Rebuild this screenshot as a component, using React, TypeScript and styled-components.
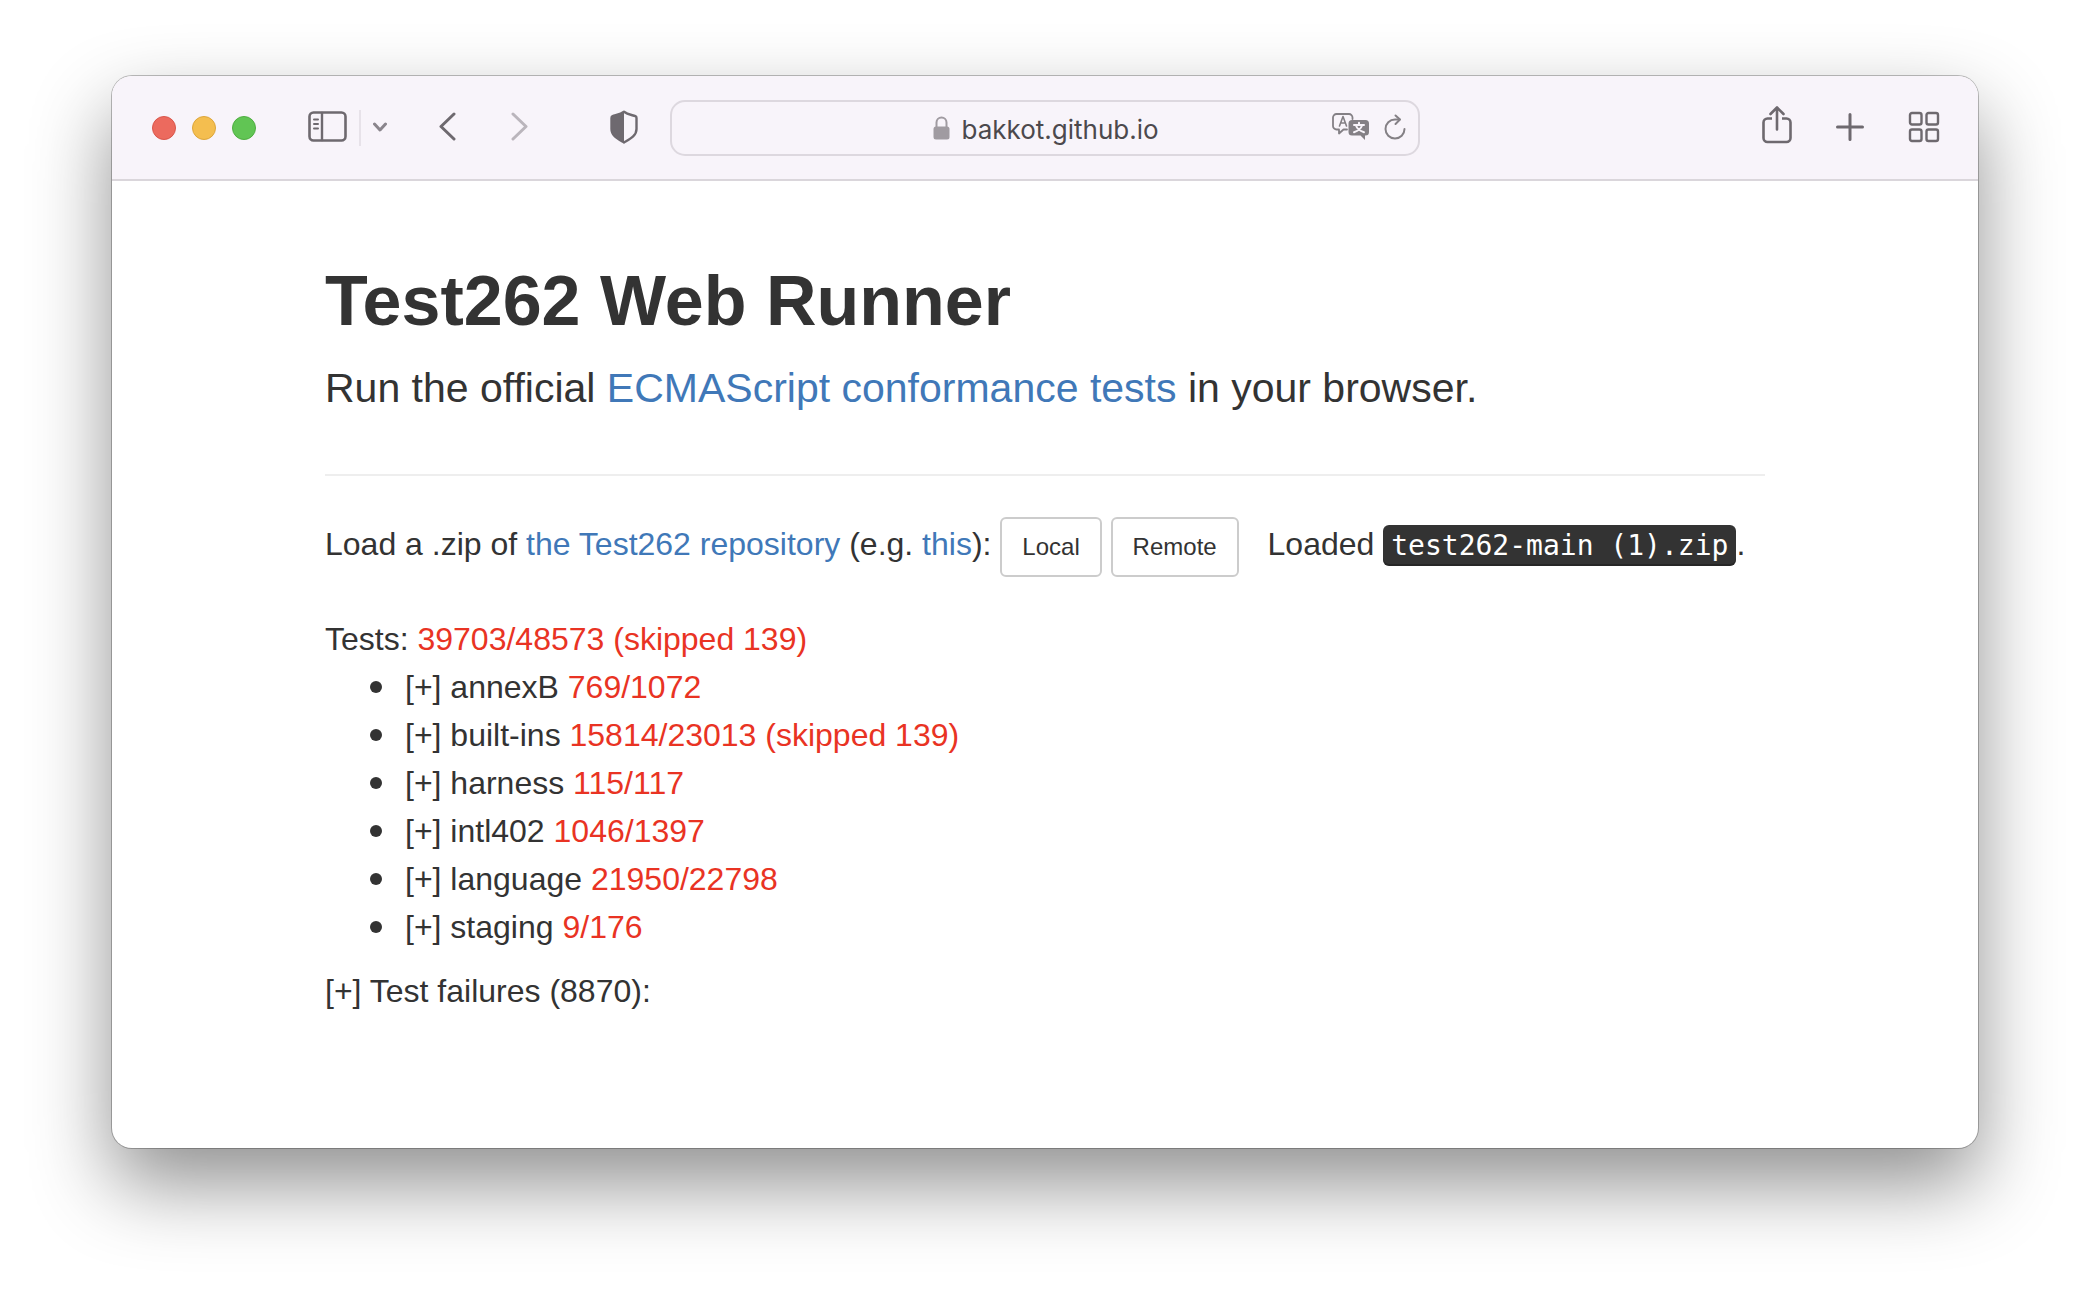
import React from "react";
import styled, { createGlobalStyle } from "styled-components";

const ink = "#333";
const glyph = "#6e696f";
const sans = `"Liberation Sans", Arial, sans-serif`;

const GlobalStyle = createGlobalStyle`
  *, *::before, *::after { box-sizing: border-box; }
  body { margin: 0; background: #fff; color: ${ink}; font-family: ${sans}; }
`;

const Desktop = styled.div`
  min-height: 100vh;
  padding: 76px 112px 148px;
`;

const Window = styled.section`
  border-radius: 20px;
  background: #fff;
  box-shadow: 0 0 0 1px rgba(0, 0, 0, 0.25), 0 36px 80px rgba(0, 0, 0, 0.44);
`;

const Toolbar = styled.header`
  display: grid;
  grid-template-columns: minmax(0, 1fr) minmax(0, 750px) minmax(0, 1fr);
  align-items: center;
  height: 105px;
  border-bottom: 2px solid #dad6db;
  border-radius: 20px 20px 0 0;
  background: #f8f4fa;
`;

const ToolGroup = styled.div<{ $end?: boolean }>`
  display: flex;
  align-items: center;
  justify-content: ${(p) => (p.$end ? "flex-end" : "flex-start")};
  gap: ${(p) => (p.$end ? "44px" : "52px")};
  padding: ${(p) => (p.$end ? "0 38px 0 0" : "0 32px 0 40px")};
`;

const Cluster = styled.div<{ $gap: number }>`
  display: flex;
  align-items: center;
  gap: ${(p) => p.$gap}px;
`;

const Light = styled.button<{ $fill: string; $edge: string }>`
  width: 24px;
  height: 24px;
  padding: 0;
  border: 1px solid ${(p) => p.$edge};
  border-radius: 50%;
  background: ${(p) => p.$fill};
`;

const Divider = styled.span`
  width: 2px;
  height: 36px;
  background: #e7e2e9;
`;

const IconButton = styled.button<{ $tone?: string; $push?: boolean }>`
  display: block;
  margin-left: ${(p) => (p.$push ? "auto" : "0")};
  padding: 0 0 2px;
  border: 0;
  background: none;
  color: ${(p) => p.$tone ?? glyph};

  svg {
    display: block;
    fill: none;
    stroke: currentColor;
    stroke-width: 3;
    stroke-linecap: round;
    stroke-linejoin: round;
  }
`;

const AddressBar = styled.div`
  display: grid;
  grid-template-columns: 1fr auto 1fr;
  align-items: center;
  height: 56px;
  padding: 0 12px;
  border: 2px solid #ddd8df;
  border-radius: 15px;
`;

const AddressLabel = styled.label`
  grid-column: 2;
  display: flex;
  align-items: center;
  gap: 12px;
`;

const AddressInput = styled.input`
  width: 196px;
  padding: 4px 0 0;
  border: 0;
  outline: 0;
  background: none;
  color: #4c494d;
  font: 26px/32px Inter, sans-serif;
`;

const AddressTools = styled.div`
  display: flex;
  align-items: center;
  justify-content: flex-end;
  gap: 14px;
`;

const Page = styled.main`
  max-width: 1440px;
  margin: 0 auto;
  padding: 80px 0 133px;
  font-size: 32px;
  line-height: 48px;
`;

const Title = styled.h1`
  margin: 0;
  font-size: 70px;
  line-height: 80px;
  font-weight: 700;
`;

const Lead = styled.p`
  margin: 17px 0 0;
  font-size: 41px;
  line-height: 60px;
  font-weight: 300;
`;

const Rule = styled.hr`
  height: 2px;
  margin: 56px 0 38px;
  border: 0;
  background: #eee;
`;

const Link = styled.a`
  color: #4078b8;
  text-decoration: none;
`;

const LoadLine = styled.p`
  margin: 0;
  line-height: 60px;
`;

const LoadButton = styled.button`
  padding: 10px 20px;
  border: 2px solid #ccc;
  border-radius: 6px;
  background: #fff;
  color: ${ink};
  font: 24px/36px ${sans};
  vertical-align: middle;
`;

const Loaded = styled.span`
  margin-left: 20px;
`;

const FileName = styled.kbd`
  padding: 4px 8px;
  border-radius: 6px;
  background: #333;
  box-shadow: inset 0 -2px 0 rgba(0, 0, 0, 0.25);
  color: #fff;
  font: 28px "DejaVu Sans Mono", monospace;
`;

const Results = styled.section`
  margin-top: 38px;
`;

const Tree = styled.ul`
  margin: 0 0 16px;
  padding-left: 80px;
  list-style: none;
`;

const Suite = styled.li`
  &::before {
    content: "";
    display: inline-block;
    width: 12px;
    height: 12px;
    margin: 0 23px 0 -35px;
    border-radius: 50%;
    background: ${ink};
    vertical-align: 5px;
  }
`;

const Toggle = styled.button`
  padding: 0;
  border: 0;
  background: none;
  color: inherit;
  font: inherit;
`;

const Score = styled.span`
  color: #e93323;
`;

const suites = [
  { name: "annexB", score: "769/1072" },
  { name: "built-ins", score: "15814/23013 (skipped 139)" },
  { name: "harness", score: "115/117" },
  { name: "intl402", score: "1046/1397" },
  { name: "language", score: "21950/22798" },
  { name: "staging", score: "9/176" },
];

const SidebarIcon = () => (
  <svg width="39" height="31" viewBox="0 0 39 31">
    <rect x="1.5" y="1.5" width="36" height="28" rx="4" strokeWidth="2.6" />
    <path d="M14 2v27" strokeWidth="2.4" />
    <path d="M6 8.500h4M6 13h4M6 17.500h4" strokeWidth="2" />
  </svg>
);

const ChevronIcon = () => (
  <svg width="14" height="10" viewBox="0 0 14 10">
    <path d="M1.500 2 7 8l5.500-6" />
  </svg>
);

const BackIcon = () => (
  <svg width="17" height="29" viewBox="0 0 17 29">
    <path d="M15 2 2 14.500 15 27" />
  </svg>
);

const ForwardIcon = () => (
  <svg width="17" height="29" viewBox="0 0 17 29">
    <path d="m2 2 13 12.500L2 27" />
  </svg>
);

const ShieldIcon = () => (
  <svg width="28" height="34" viewBox="0 0 28 34">
    <path d="M14 1.800C10.500 4.400 6 5 2.600 6.200 1.800 6.500 1.500 7 1.500 8v11c0 7 6.500 10 12.500 13.500C20 29 26.500 26 26.500 19V8c0-1-.3-1.500-1.100-1.800C22 5 17.500 4.400 14 1.800Z" strokeWidth="2.400" />
    <path d="M14 2C10.500 4.400 6 5 2.600 6.200 1.800 6.500 1.500 7 1.500 8v11c0 7 6.500 10 12.500 13.500Z" fill="currentColor" stroke="none" />
  </svg>
);

const LockIcon = () => (
  <svg width="17" height="24" viewBox="0 0 17 24" aria-hidden="true">
    <path d="M3.500 12V6.500a5 5 0 0 1 10 0V12" fill="none" stroke="#a09ba1" strokeWidth="2" />
    <rect x="0.500" y="10.500" width="16" height="13" rx="2.500" fill="#a09ba1" />
  </svg>
);

const TranslateIcon = () => (
  <svg width="38" height="28" viewBox="0 0 38 28">
    <path d="M15 16.500h-3.500L7 20.500v-4H4.500a3.500 3.500 0 0 1-3.500-3.500V4.500A3.500 3.500 0 0 1 4.500 1h12.500a3.500 3.500 0 0 1 3.500 3.500V6" strokeWidth="1.800" />
    <path d="m7.500 13 3.500-9.500L14.500 13M8.600 10h4.800" strokeWidth="1.600" />
    <path d="M20 7h13.500a3.500 3.500 0 0 1 3.500 3.500V19a3.500 3.500 0 0 1-3.500 3.500H33V27l-4.500-4.500H20a3.500 3.500 0 0 1-3.500-3.500v-8.500A3.500 3.500 0 0 1 20 7Z" fill="currentColor" stroke="none" />
    <path d="M22 12h10M27 9.800v2M30 12.500c-1 3-4 5.500-8 6.700M24 12.500c1 3 4 5.500 8 6.700" stroke="#f8f4fa" strokeWidth="2" />
  </svg>
);

const ReloadIcon = () => (
  <svg width="22" height="26" viewBox="0 0 22 26">
    <path d="M20.500 15A9.500 9.500 0 1 1 11 5.500h4.500" strokeWidth="2" />
    <path d="m11.500 1.500 4.500 4-4.500 4.500" strokeWidth="2" />
  </svg>
);

const ShareIcon = () => (
  <svg width="30" height="41" viewBox="0 0 30 41">
    <path d="M10 12.500H5.500a4 4 0 0 0-4 4V32a4 4 0 0 0 4 4h19a4 4 0 0 0 4-4V16.500a4 4 0 0 0-4-4H20" strokeWidth="2.600" strokeLinecap="butt" />
    <path d="M15 23.500V2M8.500 8 15 1.500 21.500 8" strokeWidth="2.600" />
  </svg>
);

const PlusIcon = () => (
  <svg width="28" height="28" viewBox="0 0 28 28">
    <path d="M14 1.500v25M1.500 14h25" />
  </svg>
);

const GridIcon = () => (
  <svg width="32" height="32" viewBox="0 0 32 32">
    <g strokeWidth="2.400">
      <rect x="2" y="2" width="11.500" height="11.500" rx="2" />
      <rect x="18.500" y="2" width="11.500" height="11.500" rx="2" />
      <rect x="2" y="18.500" width="11.500" height="11.500" rx="2" />
      <rect x="18.500" y="18.500" width="11.500" height="11.500" rx="2" />
    </g>
  </svg>
);

export default function App() {
  return (
    <>
      <GlobalStyle />
      <Desktop>
        <Window>
          <Toolbar>
            <ToolGroup>
              <Cluster $gap={16}>
                <Light $fill="#ec6a5e" $edge="#d9564b" aria-label="Close" />
                <Light $fill="#f4be4f" $edge="#dda63b" aria-label="Minimize" />
                <Light $fill="#61c554" $edge="#4fae41" aria-label="Zoom" />
              </Cluster>
              <Cluster $gap={12}>
                <IconButton aria-label="Show sidebar"><SidebarIcon /></IconButton>
                <Divider />
                <IconButton $tone="#8a858c" aria-label="Tab groups"><ChevronIcon /></IconButton>
              </Cluster>
              <Cluster $gap={55}>
                <IconButton aria-label="Back"><BackIcon /></IconButton>
                <IconButton $tone="#bab5bc" aria-label="Forward"><ForwardIcon /></IconButton>
              </Cluster>
              <IconButton $push aria-label="Privacy report"><ShieldIcon /></IconButton>
            </ToolGroup>
            <AddressBar>
              <AddressLabel>
                <LockIcon />
                <AddressInput type="text" aria-label="Address" defaultValue="bakkot.github.io" />
              </AddressLabel>
              <AddressTools>
                <IconButton $tone="#848085" aria-label="Translate"><TranslateIcon /></IconButton>
                <IconButton $tone="#848085" aria-label="Reload"><ReloadIcon /></IconButton>
              </AddressTools>
            </AddressBar>
            <ToolGroup $end>
              <IconButton aria-label="Share"><ShareIcon /></IconButton>
              <IconButton aria-label="New tab"><PlusIcon /></IconButton>
              <IconButton aria-label="Tab overview"><GridIcon /></IconButton>
            </ToolGroup>
          </Toolbar>
          <Page>
            <Title>Test262 Web Runner</Title>
            <Lead>
              Run the official <Link href="#ecmascript">ECMAScript conformance tests</Link> in your browser.
            </Lead>
            <Rule />
            <LoadLine>
              Load a .zip of <Link href="#repository">the Test262 repository</Link> (e.g.{" "}
              <Link href="#archive">this</Link>): <LoadButton>Local</LoadButton>{" "}
              <LoadButton>Remote</LoadButton>{" "}
              <Loaded>
                Loaded <FileName>test262-main (1).zip</FileName>.
              </Loaded>
            </LoadLine>
            <Results>
              <div>
                Tests: <Score>39703/48573 (skipped 139)</Score>
              </div>
              <Tree>
                {suites.map((suite) => (
                  <Suite key={suite.name}>
                    <Toggle>[+]</Toggle> {suite.name} <Score>{suite.score}</Score>
                  </Suite>
                ))}
              </Tree>
              <div>
                <Toggle>[+]</Toggle> Test failures (8870):
              </div>
            </Results>
          </Page>
        </Window>
      </Desktop>
    </>
  );
}
